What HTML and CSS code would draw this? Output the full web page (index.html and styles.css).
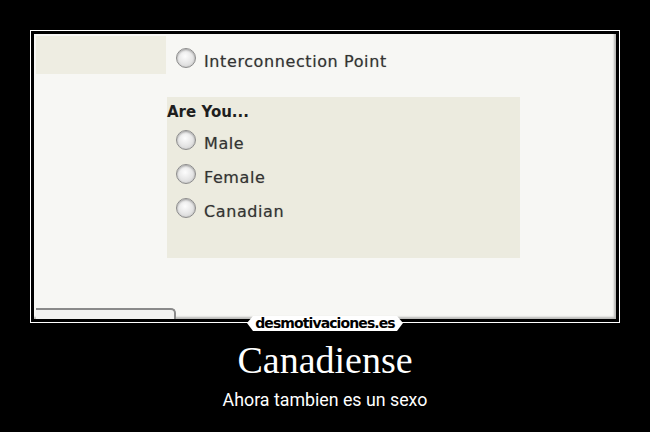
FILE: index.html
```html
<!DOCTYPE html>
<html lang="es">
<head>
  <meta charset="UTF-8">
  <title>Canadiense</title>
  <meta name="viewport" content="width=device-width, initial-scale=1.0">
  <link rel="stylesheet" href="styles.css">
</head>
<body>
  <div class="poster">
    <div class="frame">
      <div class="shot">
        <div class="top-row">
          <div class="side-fill"></div>
          <label class="option first"><span class="radio"></span>Interconnection Point</label>
        </div>

        <div class="group">
          <div class="group-title">Are You...</div>
          <label class="option"><span class="radio"></span>Male</label>
          <label class="option"><span class="radio"></span>Female</label>
          <label class="option"><span class="radio"></span>Canadian</label>
        </div>

        <div class="tab"></div>
      </div>
      <div class="logo">desmotivaciones.es</div>
    </div>

    <h1>Canadiense</h1>
    <p class="caption">Ahora tambien es un sexo</p>
  </div>
</body>
</html>
```

FILE: styles.css
```css
body {
  margin: 0;
  background: #000;
  font-family: 'DejaVu Sans', sans-serif;
}

.poster {
  width: 650px;
  height: 432px;
  display: flex;
  flex-direction: column;
  align-items: center;
  padding-top: 30px;
  box-sizing: border-box;
}

.frame {
  position: relative;
  width: 590px;
  height: 293px;
  border: 1px solid #fff;
  padding: 3px;
  box-sizing: border-box;
}

.shot {
  height: 100%;
  background: #f7f7f4;
  display: flex;
  flex-direction: column;
  box-shadow: inset -2px -2px 2px rgba(0, 0, 0, 0.25);
}

.top-row {
  display: flex;
  align-items: flex-start;
  height: 40px;
  padding-top: 2px;
}

.side-fill {
  width: 130px;
  height: 38px;
  margin-left: 2px;
  background: #eeede2;
}

.option {
  display: flex;
  align-items: center;
  gap: 8px;
  font-size: 16px;
  letter-spacing: 0.6px;
  color: #333;
  height: 34px;
  text-shadow: 0 0 1px rgba(0, 0, 0, 0.35);
}

.option.first {
  margin-left: 10px;
  margin-top: 10px;
  height: 30px;
}

.radio {
  flex: none;
  width: 18px;
  height: 18px;
  border-radius: 50%;
  border: 1px solid #8c8c8c;
  background: radial-gradient(circle at 45% 40%, #fdfdfd 0, #e4e4e4 55%, #c4c4c4 100%);
  box-shadow: inset 0 1px 2px rgba(0, 0, 0, 0.3);
  margin-top: -7px;
}

.group {
  margin-left: 133px;
  margin-top: 21px;
  width: 353px;
  height: 161px;
  background: #ecebdf;
  padding-top: 6px;
  box-sizing: border-box;
}

.group-title {
  font-weight: bold;
  font-size: 15px;
  color: #1e1e1e;
  margin-bottom: 5px;
}

.group .option {
  margin-left: 9px;
}

.tab {
  margin-top: auto;
  margin-left: 2px;
  width: 138px;
  height: 9px;
  border-top: 2px solid #8a8a8a;
  border-right: 2px solid #8a8a8a;
  border-top-right-radius: 5px;
  background: #f2f2f0;
}

.logo {
  position: absolute;
  left: 216px;
  bottom: -9px;
  width: 156px;
  height: 15px;
  background: #fff;
  clip-path: polygon(6px 0, 150px 0, 156px 7px, 150px 15px, 6px 15px, 0 7px);
  color: #000;
  font-size: 14px;
  font-weight: bold;
  line-height: 15px;
  text-align: center;
  letter-spacing: -0.9px;
}

h1 {
  margin: 15px 0 0;
  font-family: 'Liberation Serif', serif;
  font-weight: normal;
  font-size: 38px;
  line-height: 44px;
  color: #fff;
}

.caption {
  margin: 7px 0 0;
  font-family: 'Roboto', sans-serif;
  font-size: 17.8px;
  color: #fff;
}
```
